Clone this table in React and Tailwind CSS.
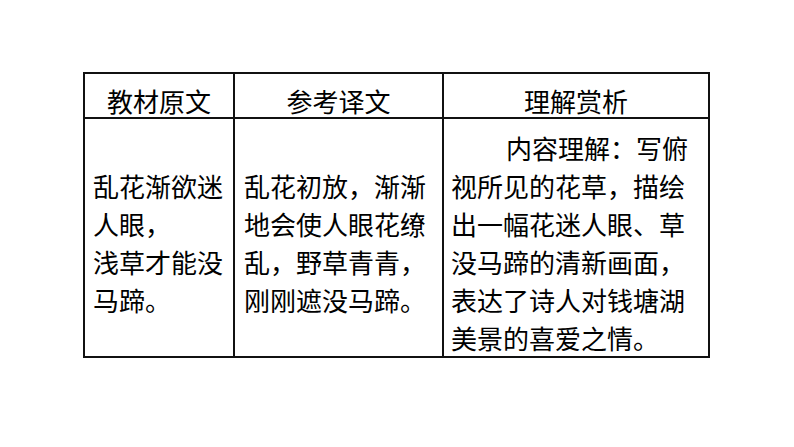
const rows = {
  original: ["乱花渐欲迷", "人眼，", "浅草才能没", "马蹄。"],
  translation: ["乱花初放，渐渐", "地会使人眼花缭", "乱，野草青青，", "刚刚遮没马蹄。"],
  analysis: [
    "内容理解：写俯",
    "视所见的花草，描绘",
    "出一幅花迷人眼、草",
    "没马蹄的清新画面，",
    "表达了诗人对钱塘湖",
    "美景的喜爱之情。",
  ],
};

const font = { fontFamily: '"Noto Sans CJK SC", "Noto Sans", sans-serif' };

const Lines = ({ lines, indentFirst }) => (
  <div>
    {lines.map((line, i) => (
      <div
        key={i}
        className={`whitespace-nowrap ${indentFirst && i === 0 ? "pl-[55px]" : ""}`}
      >
        {line}
      </div>
    ))}
  </div>
);

export default function App() {
  return (
    <div className="w-[794px] h-[447px] bg-white pt-[72px] pl-[83px]" style={font}>
      <div className="w-[627px] border-2 border-[#111] text-[26px] leading-[38px] text-black">
        <div className="grid grid-cols-[150px_209px_264px] h-[45px] border-b-2 border-[#111]">
          <div className="flex justify-center pt-[8px] border-r-2 border-[#111]">
            教材原文
          </div>
          <div className="flex justify-center pt-[8px] border-r-2 border-[#111]">
            参考译文
          </div>
          <div className="flex justify-center pt-[8px]">理解赏析</div>
        </div>
        <div className="grid grid-cols-[150px_209px_264px] h-[237px]">
          <div className="flex items-center pt-[10px] pl-[8px] border-r-2 border-[#111]">
            <Lines lines={rows.original} />
          </div>
          <div className="flex items-center pt-[10px] pl-[9px] border-r-2 border-[#111]">
            <Lines lines={rows.translation} />
          </div>
          <div className="pt-[10px] pl-[7px]">
            <Lines lines={rows.analysis} indentFirst />
          </div>
        </div>
      </div>
    </div>
  );
}
